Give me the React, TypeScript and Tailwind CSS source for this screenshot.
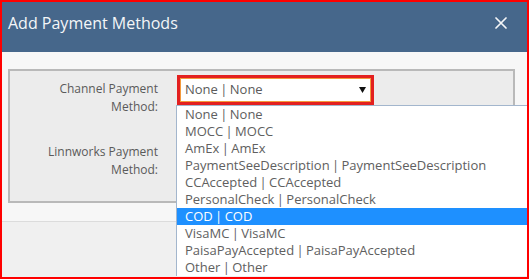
const options = [
  "None | None",
  "MOCC | MOCC",
  "AmEx | AmEx",
  "PaymentSeeDescription | PaymentSeeDescription",
  "CCAccepted | CCAccepted",
  "PersonalCheck | PersonalCheck",
  "COD | COD",
  "VisaMC | VisaMC",
  "PaisaPayAccepted | PaisaPayAccepted",
  "Other | Other",
];

const selected = "COD | COD";

const FieldLabel = ({ first }: { first: string }) => (
  <div className="w-[148px] shrink-0 text-right text-[12px] leading-[18px] text-[#5a5a5a]">
    <div>{first}</div>
    <div>Method:</div>
  </div>
);

export default function App() {
  return (
    <div
      className="relative flex h-[279px] w-[529px] flex-col overflow-hidden border-2 border-[#ff0000] bg-[#f7f7f7]"
      style={{ fontFamily: '"Open Sans", "Liberation Sans", sans-serif' }}
    >
      <header className="flex h-[50px] shrink-0 items-start justify-between bg-[#46678b] pl-[6px] pr-[20px] pt-[9px]">
        <h1 className="text-[16px] leading-[24px] text-[#f4f6f8]">
          Add Payment Methods
        </h1>
        <svg
          width="12"
          height="12"
          viewBox="0 0 12 12"
          className="mt-[6px]"
          aria-label="close"
        >
          <path
            d="M1 1 L11 11 M11 1 L1 11"
            stroke="#f4f6f8"
            strokeWidth="1.7"
            strokeLinecap="round"
          />
        </svg>
      </header>

      <div className="mt-[17px] ml-[6px] mr-[12px] border-2 border-[#b9b9b9] bg-[#ececec] pb-[22px] pt-[4px]">
        <div className="flex gap-[19px]">
          <div className="pt-[5px]">
            <FieldLabel first="Channel Payment" />
          </div>
          <div className="flex h-[30px] w-[197px] items-center border-[3px] border-[#e3201f] bg-white shadow-[inset_0_0_0_1px_#f39a3c]">
            <span className="flex-1 pl-[5px] text-[13px] text-[#5a5a5a] [word-spacing:-1px]">
              None | None
            </span>
            <svg width="7" height="6" viewBox="0 0 7 6" className="mr-[5px]">
              <path d="M0 0 H7 L3.5 6 Z" fill="#111" />
            </svg>
          </div>
        </div>
        <div className="mt-[27px] flex">
          <FieldLabel first="Linnworks Payment" />
        </div>
      </div>

      <div className="mt-[18px] flex-1 border-t border-[#dcdcdc] bg-[#f0f0f0]" />

      <ul className="absolute left-[174px] right-0 top-[103px] border-l border-t border-[#a3b6cd] bg-white text-[13px] leading-[17px] [word-spacing:-1px]">
        {options.map((option) => (
          <li
            key={option}
            className={
              option === selected
                ? "h-[17px] bg-[#1e90ff] pl-[8px] text-white"
                : "h-[17px] pl-[8px] text-[#606060]"
            }
          >
            {option}
          </li>
        ))}
      </ul>
    </div>
  );
}
